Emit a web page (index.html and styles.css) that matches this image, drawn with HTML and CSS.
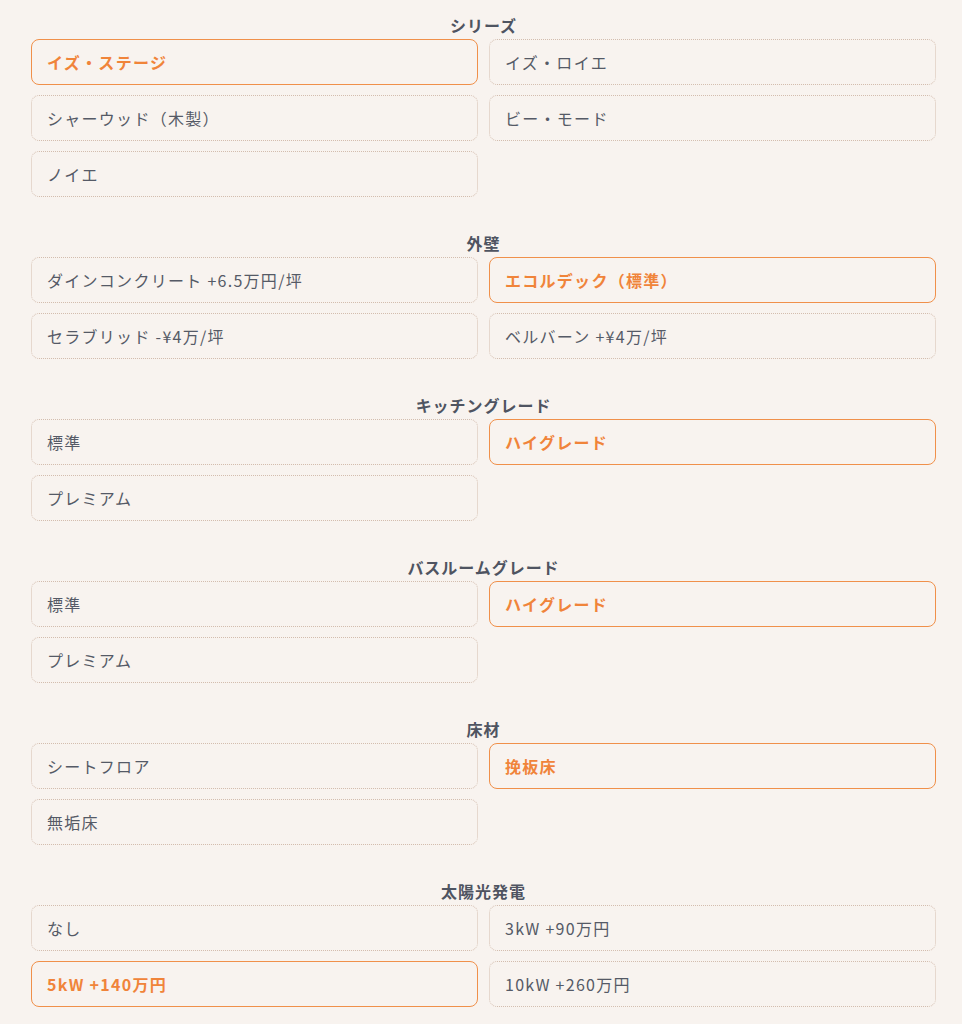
FILE: index.html
```html
<!DOCTYPE html>
<html lang="ja">
<head>
    <meta charset="UTF-8">
    <meta name="viewport" content="width=device-width, initial-scale=1.0">
    <title>仕様選択</title>
    <link rel="stylesheet" href="styles.css">
</head>
<body>
    <div class="options">

        <div class="group">
            <h3>シリーズ</h3>
            <div class="grid">
                <button class="opt selected">イズ・ステージ</button>
                <button class="opt">イズ・ロイエ</button>
                <button class="opt">シャーウッド（木製）</button>
                <button class="opt">ビー・モード</button>
                <button class="opt">ノイエ</button>
            </div>
        </div>

        <div class="group">
            <h3>外壁</h3>
            <div class="grid">
                <button class="opt">ダインコンクリート +6.5万円/坪</button>
                <button class="opt selected">エコルデック（標準）</button>
                <button class="opt">セラブリッド -¥4万/坪</button>
                <button class="opt">ベルバーン +¥4万/坪</button>
            </div>
        </div>

        <div class="group">
            <h3>キッチングレード</h3>
            <div class="grid">
                <button class="opt">標準</button>
                <button class="opt selected">ハイグレード</button>
                <button class="opt">プレミアム</button>
            </div>
        </div>

        <div class="group">
            <h3>バスルームグレード</h3>
            <div class="grid">
                <button class="opt">標準</button>
                <button class="opt selected">ハイグレード</button>
                <button class="opt">プレミアム</button>
            </div>
        </div>

        <div class="group">
            <h3>床材</h3>
            <div class="grid">
                <button class="opt">シートフロア</button>
                <button class="opt selected">挽板床</button>
                <button class="opt">無垢床</button>
            </div>
        </div>

        <div class="group">
            <h3>太陽光発電</h3>
            <div class="grid">
                <button class="opt">なし</button>
                <button class="opt">3kW +90万円</button>
                <button class="opt selected">5kW +140万円</button>
                <button class="opt">10kW +260万円</button>
            </div>
        </div>

    </div>
</body>
</html>
```

FILE: styles.css
```css
body {
    margin: 0;
    padding: 15px 26px 0 31px;
    background-color: #f8f3ef;
    font-family: "Noto Sans CJK JP", "Noto Sans", sans-serif;
    color: #4f5461;
}

.options {
    display: flex;
    flex-direction: column;
    gap: 36px;
}

.group h3 {
    margin: 0 0 4px;
    text-align: center;
    font-size: 16px;
    line-height: 20px;
    letter-spacing: 0.06em;
    font-weight: bold;
    color: #4f5461;
}

.grid {
    display: grid;
    grid-template-columns: 1fr 1fr;
    gap: 10px 11px;
}

.opt {
    height: 46px;
    padding: 0 15px;
    text-align: left;
    font-family: inherit;
    font-size: 16px;
    letter-spacing: 0.08em;
    color: #555a66;
    background-color: transparent;
    border: 1px dotted #d3bdae; /* faint border on unselected */
    border-radius: 8px;
    cursor: pointer;
}

.opt.selected {
    border: 1.5px solid #f0904a;
    color: #f0843a;
    font-weight: bold;
}
```
